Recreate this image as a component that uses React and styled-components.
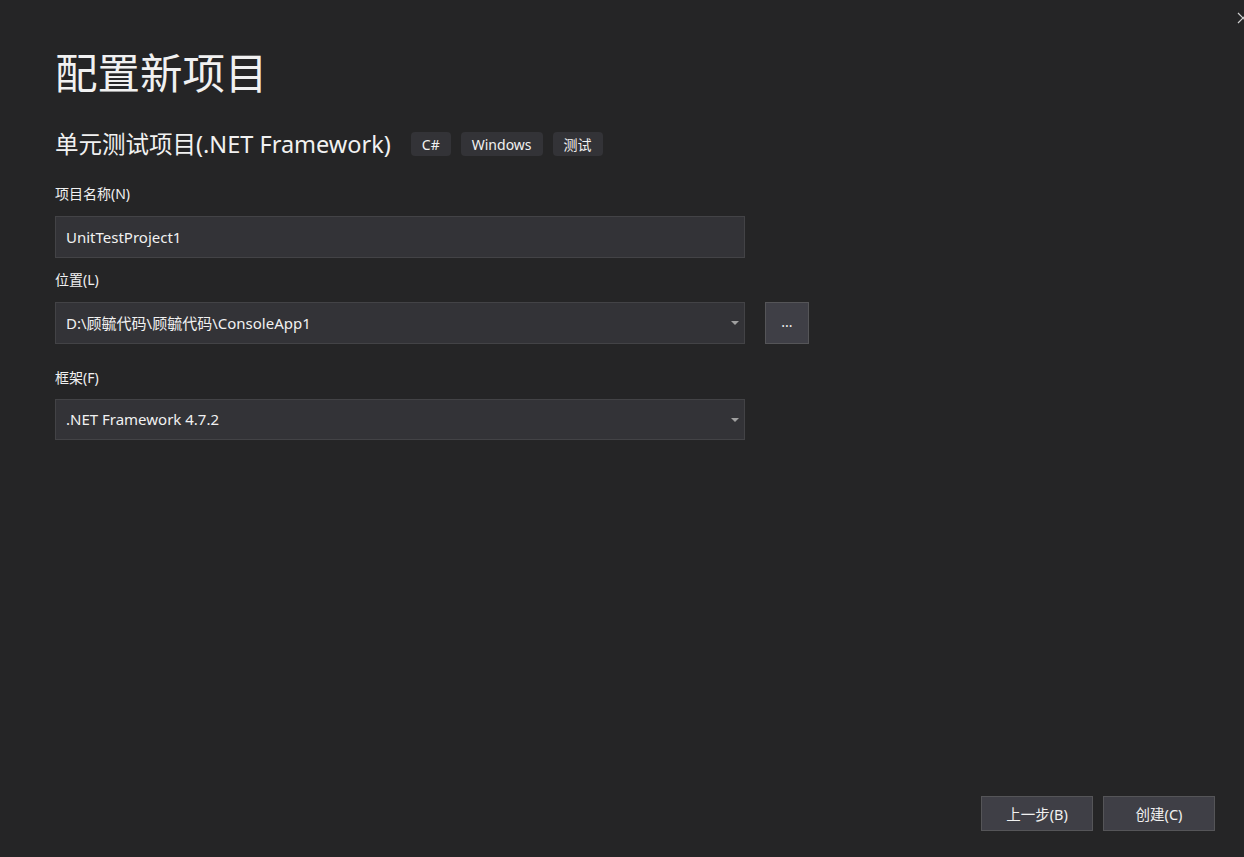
import React from 'react';
import styled, { createGlobalStyle } from 'styled-components';

const GlobalStyle = createGlobalStyle`
  html, body {
    margin: 0;
    padding: 0;
    background: #252526;
  }
  body {
    font-family: "Segoe UI", "Noto Sans", "Noto Sans CJK SC", sans-serif;
    color: #f1f1f1;
  }
`;

const Page = styled.div`
  position: relative;
  box-sizing: border-box;
  height: 857px;
  padding: 42px 29px 26px 55px;
  display: flex;
  flex-direction: column;
  overflow: hidden;
`;

const CloseButton = styled.div`
  position: absolute;
  top: 8px;
  right: -6px;
  width: 14px;
  height: 14px;
  color: #d0d0d0;
`;

const Title = styled.h1`
  margin: 0;
  font-size: 42.5px;
  font-weight: 400;
  line-height: 58px;
  font-family: "Noto Sans CJK SC", sans-serif;
`;

const SubtitleRow = styled.div`
  display: flex;
  align-items: center;
  gap: 10px;
  margin-top: 29px;
`;

const Subtitle = styled.h2`
  margin: 0 10px 0 0;
  font-size: 23.5px;
  font-weight: 400;
  line-height: 30px;
  font-family: "Noto Sans", "Noto Sans CJK SC", sans-serif;
`;

const Tag = styled.span`
  display: inline-flex;
  align-items: center;
  height: 24px;
  padding: 0 11px;
  background: #333337;
  border-radius: 4px;
  font-size: 14px;
  color: #f1f1f1;
`;

const Field = styled.div`
  display: flex;
  flex-direction: column;
  margin-top: ${p => p.$top}px;
`;

const Label = styled.label`
  font-size: 14px;
  line-height: 20px;
  margin-bottom: ${p => p.$gap}px;
`;

const InputRow = styled.div`
  display: flex;
  align-items: center;
  gap: 20px;
`;

const Box = styled.div`
  position: relative;
  box-sizing: border-box;
  width: 690px;
  height: ${p => p.$h}px;
  display: flex;
  align-items: center;
  padding: 0 10px 1px;
  background: #333337;
  border: 1px solid #434346;
  font-size: 15px;
  color: #f1f1f1;
`;

const Caret = styled.span`
  position: absolute;
  right: 5px;
  top: 50%;
  margin-top: -2px;
  width: 0;
  height: 0;
  border-left: 4px solid transparent;
  border-right: 4px solid transparent;
  border-top: 4px solid #a0a0a0;
`;

const BrowseButton = styled.button`
  box-sizing: border-box;
  width: 44px;
  height: 42px;
  background: #3f3f46;
  border: 1px solid #555558;
  color: #f1f1f1;
  font-size: 14px;
  font-family: inherit;
  padding: 0 0 4px;
`;

const Footer = styled.div`
  margin-top: auto;
  display: flex;
  justify-content: flex-end;
  gap: 10px;
`;

const ActionButton = styled.button`
  box-sizing: border-box;
  width: 112px;
  height: 35px;
  background: #3f3f46;
  border: 1px solid #555558;
  color: #f1f1f1;
  font-size: 14.5px;
  font-family: "Noto Sans", "Noto Sans CJK SC", sans-serif;
  padding: 0 0 1px;
`;

export default function App() {
  return (
    <>
      <GlobalStyle />
      <Page>
        <CloseButton>
          <svg width="14" height="14" viewBox="0 0 14 14">
            <path d="M2 2 L12 12 M12 2 L2 12" stroke="currentColor" strokeWidth="1.2" fill="none" />
          </svg>
        </CloseButton>
        <Title>配置新项目</Title>
        <SubtitleRow>
          <Subtitle>单元测试项目(.NET Framework)</Subtitle>
          <Tag>C#</Tag>
          <Tag>Windows</Tag>
          <Tag>测试</Tag>
        </SubtitleRow>
        <Field $top={25}>
          <Label $gap={12}>项目名称(N)</Label>
          <Box $h={42}>UnitTestProject1</Box>
        </Field>
        <Field $top={12}>
          <Label $gap={12}>位置(L)</Label>
          <InputRow>
            <Box $h={42}>
              D:\顾毓代码\顾毓代码\ConsoleApp1
              <Caret />
            </Box>
            <BrowseButton>...</BrowseButton>
          </InputRow>
        </Field>
        <Field $top={24}>
          <Label $gap={11}>框架(F)</Label>
          <Box $h={41}>
            .NET Framework 4.7.2
            <Caret />
          </Box>
        </Field>
        <Footer>
          <ActionButton>上一步(B)</ActionButton>
          <ActionButton>创建(C)</ActionButton>
        </Footer>
      </Page>
    </>
  );
}
